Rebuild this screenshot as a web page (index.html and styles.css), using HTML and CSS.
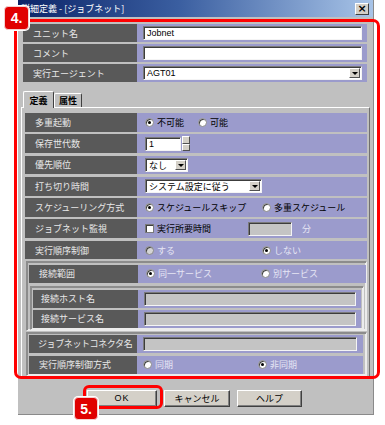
FILE: index.html
```html
<!DOCTYPE html>
<html lang="ja">
<head>
<meta charset="utf-8">
<link rel="stylesheet" href="styles.css">
</head>
<body>
<div class="dialog">
  <div class="titlebar">
    <span class="title">詳細定義 - [ジョブネット]</span>
    <span class="close">×</span>
  </div>
  <div class="top">
    <div class="row"><div class="lbl">ユニット名</div><div class="val"><div class="input wide">Jobnet</div></div></div>
    <div class="row"><div class="lbl">コメント</div><div class="val"><div class="input wide"></div></div></div>
    <div class="row"><div class="lbl">実行エージェント</div><div class="val"><div class="input wide sel">AGT01<span class="dd"></span></div></div></div>
  </div>
  <div class="tabs">
    <div class="tab active">定義</div>
    <div class="tab">属性</div>
  </div>
  <div class="panel">
    <div class="prow"><div class="lbl">多重起動</div><div class="val">
      <span class="opt w53"><span class="radio on"></span>不可能</span>
      <span class="opt"><span class="radio"></span>可能</span></div></div>
    <div class="prow"><div class="lbl">保存世代数</div><div class="val">
      <div class="input num">1</div><div class="spin"><span></span><span></span></div></div></div>
    <div class="prow"><div class="lbl">優先順位</div><div class="val">
      <div class="input sel w43">なし<span class="dd"></span></div></div></div>
    <div class="prow"><div class="lbl">打ち切り時間</div><div class="val">
      <div class="input sel w117">システム設定に従う<span class="dd"></span></div></div></div>
    <div class="prow"><div class="lbl">スケジューリング方式</div><div class="val">
      <span class="opt w117"><span class="radio on"></span>スケジュールスキップ</span>
      <span class="opt"><span class="radio"></span>多重スケジュール</span></div></div>
    <div class="prow"><div class="lbl">ジョブネット監視</div><div class="val">
      <span class="opt w103"><span class="check"></span>実行所要時間</span>
      <div class="input dis w44"></div><span class="dtext unit">分</span></div></div>
    <div class="prow"><div class="lbl">実行順序制御</div><div class="val">
      <span class="opt w117 dtext"><span class="radio dis"></span>する</span>
      <span class="opt dtext"><span class="radio on"></span>しない</span></div></div>
    <div class="group g1">
      <div class="grow"><div class="lbl">接続範囲</div><div class="val">
        <span class="opt w115 dtext"><span class="radio on"></span>同一サービス</span>
        <span class="opt dtext"><span class="radio"></span>別サービス</span></div></div>
      <div class="group g2">
        <div class="irow"><div class="lbl">接続ホスト名</div><div class="val"><div class="input dis full"></div></div></div>
        <div class="irow"><div class="lbl">接続サービス名</div><div class="val"><div class="input dis full"></div></div></div>
      </div>
    </div>
    <div class="group g3">
      <div class="crow"><div class="lbl tight">ジョブネットコネクタ名</div><div class="val"><div class="input dis full"></div></div></div>
      <div class="crow"><div class="lbl">実行順序制御方式</div><div class="val">
        <span class="opt w115 dtext"><span class="radio"></span>同期</span>
        <span class="opt dtext"><span class="radio on"></span>非同期</span></div></div>
    </div>
  </div>
  <div class="buttons">
    <div class="btn ok">OK</div>
    <div class="btn cancel">キャンセル</div>
    <div class="btn help">ヘルプ</div>
  </div>
</div>
<div class="frame frame4"></div>
<div class="badge badge4">4.</div>
<div class="frame frame5"></div>
<div class="badge badge5">5.</div>
</body>
</html>
```

FILE: styles.css
```css
* { box-sizing: border-box; margin: 0; padding: 0; }
html, body { width: 385px; height: 425px; overflow: hidden; background: #fff; }
body {
  position: relative;
  font-family: "Noto Sans CJK JP", "Noto Sans", sans-serif;
  font-size: 9px;
  line-height: 1;
  color: #000;
}
.dialog {
  margin-left: 18px;
  width: 356px;
  height: 415px;
  background: #c0c0c0;
  border-right: 1px solid #8a8a8a;
  border-bottom: 1px solid #8a8a8a;
  display: flex;
  flex-direction: column;
}
.titlebar {
  height: 17px;
  background: linear-gradient(to right, #0c2468 0%, #3a5ea0 45%, #a8c4e8 100%);
  display: flex;
  align-items: center;
  justify-content: space-between;
  padding: 0 4px 0 3px;
  color: #fff;
}
.title { font-size: 9px; }
.close {
  width: 14px;
  height: 12px;
  background: #d4d0c8;
  border: 1px solid;
  border-color: #fff #404040 #404040 #fff;
  color: #000;
  font: bold 11px/9px "DejaVu Sans", sans-serif;
  text-align: center;
}
.top {
  padding: 7px 0 0 5px;
  display: flex;
  flex-direction: column;
  gap: 2px;
}
.row, .prow, .grow, .irow, .crow { display: flex; }
.row { height: 18px; }
.lbl {
  background: #595959;
  color: #e8e8e8;
  padding-left: 10px;
  display: flex;
  align-items: center;
  white-space: nowrap;
  overflow: hidden;
}
.val {
  background: #9b9bcc;
  display: flex;
  align-items: center;
  padding-left: 6px;
  white-space: nowrap;
}
.row .lbl { width: 114px; }
.row .val { width: 230px; }
.input {
  height: 14px;
  background: #fff;
  border: 1px solid;
  border-color: #7a7a7a #f4f4f4 #f4f4f4 #7a7a7a;
  box-shadow: inset 1px 1px 0 #3c3c3c;
  font-family: "Liberation Sans", "Noto Sans CJK JP", sans-serif;
  font-size: 9px;
  padding: 2px 0 0 3px;
  position: relative;
}
.input.wide { width: 219px; }
.sel { font-family: "Noto Sans CJK JP", sans-serif; }
.row .sel { font-family: "Liberation Sans", sans-serif; }
.dd {
  position: absolute;
  right: 1px;
  top: 1px;
  width: 11px;
  height: 10px;
  background: #d4d0c8;
  border: 1px solid;
  border-color: #fff #505050 #505050 #fff;
}
.dd::after {
  content: "";
  position: absolute;
  left: 2px;
  top: 3px;
  border-left: 3px solid transparent;
  border-right: 3px solid transparent;
  border-top: 3px solid #000;
}
.tabs {
  display: flex;
  align-items: flex-end;
  padding: 8px 0 0 5px;
  height: 25px;
}
.tab {
  height: 14px;
  width: 28px;
  border: 1px solid;
  border-bottom: none;
  border-color: #fff #404040 #404040 #fff;
  border-radius: 2px 2px 0 0;
  display: flex;
  align-items: center;
  justify-content: center;
  font-weight: bold;
  background: #c0c0c0;
}
.tab.active { height: 17px; width: 31px; position: relative; z-index: 1; margin-bottom: -1px; }
.panel {
  margin-left: 3px;
  width: 349px;
  height: 270px;
  border: 1px solid;
  border-color: #fff #707070 #707070 #fff;
  padding: 5px 0 0 3px;
  display: flex;
  flex-direction: column;
}
.prow { height: 19px; margin-bottom: 2.5px; }
.prow .lbl { width: 112px; }
.prow .val { width: 230px; padding-left: 8px; }
.opt { display: inline-flex; align-items: center; gap: 3px; }
.w53 { width: 53px; }
.w117 { width: 117px; }
.w115 { width: 115px; }
.w103 { width: 103px; }
.w43 { width: 43px; }
.w44 { width: 44px; }
.radio {
  width: 9px;
  height: 9px;
  border-radius: 50%;
  background: #fff;
  border: 1px solid #8a8a8a;
  box-shadow: inset 1px 1px 0 #404040;
  position: relative;
  flex: none;
}
.radio.on::after {
  content: "";
  position: absolute;
  left: 2px;
  top: 2px;
  width: 3px;
  height: 3px;
  border-radius: 50%;
  background: #000;
}
.radio.dis { background: #d4d4d4; }
.check {
  width: 9px;
  height: 9px;
  background: #fff;
  border: 1px solid #7a7a7a;
  box-shadow: inset 1px 1px 0 #404040;
  flex: none;
}
.dtext { color: #e6e6f4; }
.unit { margin-left: 10px; }
.num { width: 36px; }
.spin { display: flex; flex-direction: column; height: 15px; margin-left: 1px; }
.spin span {
  width: 8px;
  height: 7.5px;
  background: #d4d0c8;
  border: 1px solid;
  border-color: #fff #505050 #505050 #fff;
}
.input.w43 { width: 43px; font-family: "Noto Sans CJK JP", sans-serif; }
.input.w117 { width: 117px; }
.input.dis { background: #c4c4c4; }
.group {
  border: 1px solid;
  border-color: #8c8c8c #ececec #ececec #8c8c8c;
  box-shadow: 1px 1px 0 #8c8c8c inset, -1px -1px 0 #ececec inset;
}
.g1 {
  margin-left: 1px;
  width: 341px;
  height: 70px;
  padding: 3px 0 0 2px;
  margin-top: -1px;
}
.grow { height: 18px; }
.grow .lbl { width: 109px; }
.grow .val { width: 228px; padding-left: 8px; }
.g2 {
  margin: 3px 0 0 1px;
  width: 334px;
  height: 44px;
  padding: 3px 0 0 2px;
}
.irow { height: 18px; margin-bottom: 2px; }
.irow .lbl { width: 105px; padding-left: 8px; }
.irow .val { width: 223px; }
.input.full { width: 212px; }
.g3 {
  margin: 1px 0 0 1px;
  width: 341px;
  height: 44px;
  padding: 2px 0 0 2px;
}
.crow { height: 18px; margin-bottom: 3px; }
.crow .lbl { width: 108px; padding-left: 10px; }
.crow .lbl.tight { padding-left: 9px; letter-spacing: -0.4px; }
.crow .val { width: 226px; }
.crow .input.full { width: 214px; }
.buttons {
  display: flex;
  gap: 7px;
  padding: 13px 0 0 69px;
}
.btn {
  height: 17px;
  background: #d4d0c8;
  border: 1px solid;
  border-color: #fff #404040 #404040 #fff;
  box-shadow: inset -1px -1px 0 #808080;
  display: flex;
  align-items: center;
  justify-content: center;
  font-size: 9px;
}
.ok { width: 70px; font-family: "Liberation Sans", sans-serif; letter-spacing: 1px; }
.cancel { width: 66px; }
.help { width: 65px; }
.frame {
  position: absolute;
  border: 3px solid #f00;
}
.frame4 { left: 14px; top: 19px; width: 366px; height: 360px; border-radius: 7px; }
.frame5 { left: 83px; top: 385px; width: 80px; height: 24px; border-radius: 6px; }
.badge {
  position: absolute;
  background: #e00000;
  color: #fff;
  border: 1px solid #f4d0d0;
  box-shadow: 0 0 0 1px #fff;
  border-radius: 4px;
  font: bold 14px/1 "Liberation Sans", sans-serif;
  display: flex;
  align-items: center;
  justify-content: center;
}
.badge4 { left: 4px; top: 6px; width: 25px; height: 24px; }
.badge5 { left: 74px; top: 397px; width: 24px; height: 23px; }
```
